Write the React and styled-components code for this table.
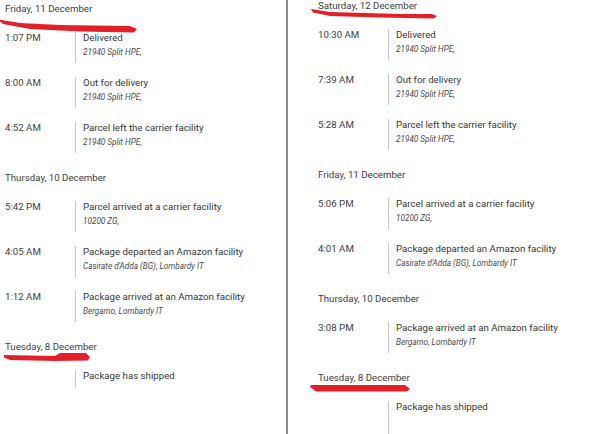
import React from "react";
import styled, { createGlobalStyle } from "styled-components";

const Global = createGlobalStyle`
  html, body {
    margin: 0;
    padding: 0;
    background: #ffffff;
    overflow: hidden;
  }
  body {
    font-family: Roboto, "Liberation Sans", Arial, sans-serif;
    color: #3a3a3a;
  }
`;

const Page = styled.div`
  display: flex;
  width: 598px;
  height: 434px;
  overflow: hidden;
  background: #fff;
`;

const Column = styled.div`
  box-sizing: border-box;
  display: flex;
  flex-direction: column;
  gap: 19px;
  padding: ${(p) => p.$top}px 0 0 ${(p) => p.$left}px;
  ${(p) => (p.$divider ? "width: 288px; border-right: 2px solid #8a8a8a;" : "flex: 1;")}
`;

const Group = styled.section`
  display: flex;
  flex-direction: column;
`;

const DayHeader = styled.div`
  position: relative;
  font-size: 9.7px;
  line-height: 12px;
  color: #3d3d3d;
  margin-bottom: 17px;
  white-space: nowrap;
`;

const Scribble = styled.svg`
  position: absolute;
  left: -10px;
  top: 0;
  width: 160px;
  height: 34px;
  overflow: visible;
  pointer-events: none;
`;

const Events = styled.div`
  display: flex;
  flex-direction: column;
  gap: 14px;
`;

const EventRow = styled.div`
  display: grid;
  grid-template-columns: 70px 1fr;
`;

const Time = styled.div`
  font-size: 9.7px;
  line-height: 11px;
  color: #3d3d3d;
  white-space: nowrap;
`;

const Detail = styled.div`
  box-sizing: border-box;
  border-left: 1px solid #c8c8c8;
  padding: 0 0 6px 7px;
  min-height: ${(p) => p.$h || 31}px;
`;

const Title = styled.div`
  font-size: 9.7px;
  line-height: 11px;
  color: #363636;
  white-space: nowrap;
`;

const Sub = styled.div`
  font-size: 8.2px;
  font-style: italic;
  line-height: 10px;
  margin-top: 4px;
  color: #4a4a4a;
  white-space: nowrap;
`;

const marks = {
  leftTop:
    "M3 16.5 L25 20 L65 22 L135 23 L142 26 L139 29.5 L85 28.5 L35 26 L8 21 Z",
  rightTop:
    "M3 9 L22 12 L92 14 L124 14 L129 16 L126 18.5 L72 17.5 L22 16 L5 12.5 Z",
  leftBottom:
    "M9 14 L60 15 L65 12 L91 12 L95 16 L93 19.5 L60 20 L15 19 L9 16.5 Z",
  rightBottom: "M3 13 L97 13 L102 17 L99 19.5 L8 19.5 L2 15 Z",
};

const left = [
  {
    date: "Friday, 11 December",
    mark: "leftTop",
    events: [
      { time: "1:07 PM", title: "Delivered", sub: "21940 Split HPE," },
      { time: "8:00 AM", title: "Out for delivery", sub: "21940 Split HPE," },
      { time: "4:52 AM", title: "Parcel left the carrier facility", sub: "21940 Split HPE," },
    ],
  },
  {
    date: "Thursday, 10 December",
    events: [
      { time: "5:42 PM", title: "Parcel arrived at a carrier facility", sub: "10200 ZG," },
      { time: "4:05 AM", title: "Package departed an Amazon facility", sub: "Casirate d'Adda (BG), Lombardy IT" },
      { time: "1:12 AM", title: "Package arrived at an Amazon facility", sub: "Bergamo, Lombardy IT" },
    ],
  },
  {
    date: "Tuesday, 8 December",
    mark: "leftBottom",
    events: [{ time: "", title: "Package has shipped", h: 18 }],
  },
];

const right = [
  {
    date: "Saturday, 12 December",
    mark: "rightTop",
    events: [
      { time: "10:30 AM", title: "Delivered", sub: "21940 Split HPE," },
      { time: "7:39 AM", title: "Out for delivery", sub: "21940 Split HPE," },
      { time: "5:28 AM", title: "Parcel left the carrier facility", sub: "21940 Split HPE," },
    ],
  },
  {
    date: "Friday, 11 December",
    events: [
      { time: "5:06 PM", title: "Parcel arrived at a carrier facility", sub: "10200 ZG," },
      { time: "4:01 AM", title: "Package departed an Amazon facility", sub: "Casirate d'Adda (BG), Lombardy IT" },
    ],
  },
  {
    date: "Thursday, 10 December",
    events: [
      { time: "3:08 PM", title: "Package arrived at an Amazon facility", sub: "Bergamo, Lombardy IT" },
    ],
  },
  {
    date: "Tuesday, 8 December",
    mark: "rightBottom",
    events: [{ time: "", title: "Package has shipped", h: 44 }],
  },
];

function Day({ day }) {
  return (
    <Group>
      <DayHeader>
        {day.date}
        {day.mark && (
          <Scribble viewBox="0 0 160 34" aria-hidden="true">
            <path d={marks[day.mark]} fill="#e3202a" />
          </Scribble>
        )}
      </DayHeader>
      <Events>
        {day.events.map((e, i) => (
          <EventRow key={i}>
            <Time>{e.time}</Time>
            <Detail $h={e.h}>
              <Title>{e.title}</Title>
              {e.sub && <Sub>{e.sub}</Sub>}
            </Detail>
          </EventRow>
        ))}
      </Events>
    </Group>
  );
}

export default function App() {
  return (
    <>
      <Global />
      <Page>
        <Column $divider $top={3} $left={5}>
          {left.map((d, i) => (
            <Day key={i} day={d} />
          ))}
        </Column>
        <Column $top={0} $left={30}>
          {right.map((d, i) => (
            <Day key={i} day={d} />
          ))}
        </Column>
      </Page>
    </>
  );
}
